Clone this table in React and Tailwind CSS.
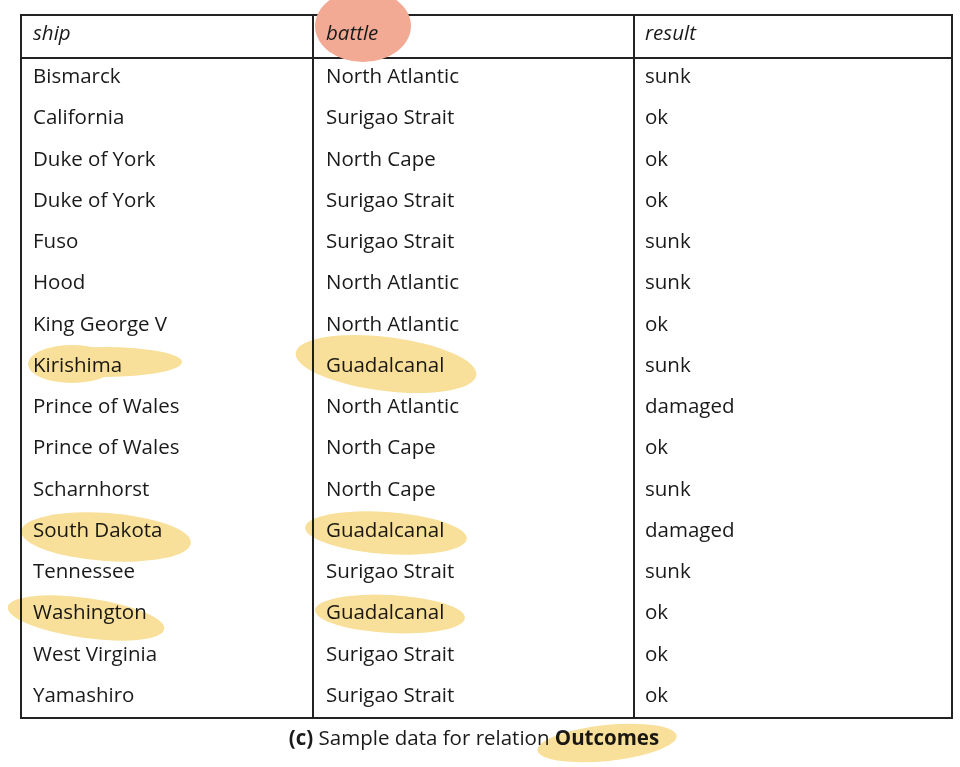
const rows = [
  ["Bismarck", "North Atlantic", "sunk"],
  ["California", "Surigao Strait", "ok"],
  ["Duke of York", "North Cape", "ok"],
  ["Duke of York", "Surigao Strait", "ok"],
  ["Fuso", "Surigao Strait", "sunk"],
  ["Hood", "North Atlantic", "sunk"],
  ["King George V", "North Atlantic", "ok"],
  ["Kirishima", "Guadalcanal", "sunk"],
  ["Prince of Wales", "North Atlantic", "damaged"],
  ["Prince of Wales", "North Cape", "ok"],
  ["Scharnhorst", "North Cape", "sunk"],
  ["South Dakota", "Guadalcanal", "damaged"],
  ["Tennessee", "Surigao Strait", "sunk"],
  ["Washington", "Guadalcanal", "ok"],
  ["West Virginia", "Surigao Strait", "ok"],
  ["Yamashiro", "Surigao Strait", "ok"],
];

// hand-drawn highlighter marks laid over the table
function Highlights() {
  const yellow = "#f8e09a";
  return (
    <svg className="absolute inset-0 pointer-events-none mix-blend-multiply" width="960" height="767" viewBox="0 0 960 767">
      {/* Kirishima */}
      <ellipse cx="106" cy="362" rx="76" ry="15" fill={yellow} />
      <ellipse cx="72" cy="364" rx="44" ry="19" fill={yellow} />
      {/* Guadalcanal x3 */}
      <ellipse cx="386" cy="364" rx="91" ry="27" fill={yellow} transform="rotate(7 386 364)" />
      <ellipse cx="386" cy="533" rx="81" ry="21" fill={yellow} transform="rotate(4 386 533)" />
      <ellipse cx="390" cy="614" rx="75" ry="19" fill={yellow} transform="rotate(3 390 614)" />
      {/* South Dakota */}
      <ellipse cx="106" cy="537" rx="85" ry="24" fill={yellow} transform="rotate(4 106 537)" />
      {/* Washington */}
      <ellipse cx="86" cy="618" rx="79" ry="20" fill={yellow} transform="rotate(8 86 618)" />
      {/* Outcomes */}
      <ellipse cx="607" cy="743" rx="70" ry="18" fill={yellow} transform="rotate(-6 607 743)" />
    </svg>
  );
}

export default function App() {
  return (
    <div className="relative w-[960px] h-[767px] bg-white text-[#1a1a1a] font-['Open_Sans',sans-serif] overflow-hidden">
      <div className="ml-[20px] mt-[14px] w-[933px] border-2 border-[#222]">
        <div className="grid grid-cols-[290px_321px_1fr] h-[43px] border-b-2 border-[#222] italic text-[20.5px] leading-[28px]">
          <div className="pl-[11px] pt-[2px]">ship</div>
          <div className="relative pl-[12px] pt-[2px] border-l-2 border-[#222]">
            {/* salmon circle drawn over the table's top rule */}
            <svg className="absolute left-[0px] top-[-16px]" width="100" height="80" viewBox="0 0 100 80">
              <ellipse cx="49" cy="26" rx="48" ry="36" fill="#f3aa95" />
            </svg>
            <span className="relative">battle</span>
          </div>
          <div className="pl-[10px] pt-[2px] border-l-2 border-[#222]">result</div>
        </div>
        <div className="flex flex-col h-[658px] text-[20.5px] leading-[28px]">
          {rows.map((r, i) => (
            <div key={i} className={`grid grid-cols-[290px_321px_1fr] ${i === rows.length - 1 ? "flex-1" : "h-[41.25px] shrink-0"}`}>
              <div className="pl-[11px] pt-[2px]">{r[0]}</div>
              <div className="pl-[12px] pt-[2px] border-l-2 border-[#222]">{r[1]}</div>
              <div className="pl-[10px] pt-[2px] border-l-2 border-[#222]">{r[2]}</div>
            </div>
          ))}
        </div>
      </div>
      <p className="mt-[4px] ml-[20px] w-[908px] text-center text-[20.5px] leading-[28px]">
        <b>(c)</b> Sample data for relation <b>Outcomes</b>
      </p>
      <Highlights />
    </div>
  );
}
